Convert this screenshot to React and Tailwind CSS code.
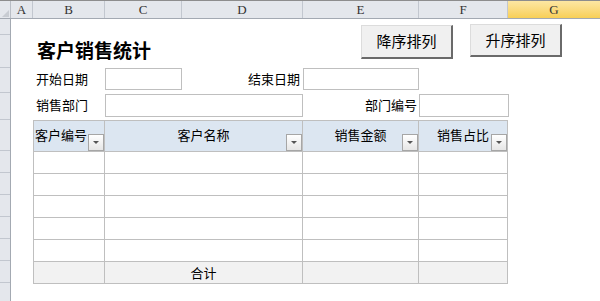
import React from "react";

const font = { fontFamily: '"Noto Sans CJK SC", "Noto Sans", sans-serif' };

const columns = [
  { label: "A", width: "w-[22px]" },
  { label: "B", width: "w-[72px]" },
  { label: "C", width: "w-[77px]" },
  { label: "D", width: "w-[121px]" },
  { label: "E", width: "w-[116px]" },
  { label: "F", width: "w-[89px]" },
];

const rowHeights = [
  "h-[16px]",
  "h-[33px]",
  "h-[25px]",
  "h-[27px]",
  "h-[31px]",
  "h-[22px]",
  "h-[22px]",
  "h-[22px]",
  "h-[22px]",
  "h-[22px]",
  "h-[22px]",
  "h-[40px]",
];

const FilterButton = () => (
  <div className="absolute right-0 bottom-0 w-[16px] h-[17px] border border-[#a6a6a6] bg-gradient-to-b from-white to-[#e6e6e6] flex items-center justify-center">
    <div className="w-0 h-0 border-l-[3px] border-r-[3px] border-t-[3px] border-l-transparent border-r-transparent border-t-[#555]" />
  </div>
);

const SheetButton = ({ children, className }) => (
  <button
    className={`bg-[#f0f0f0] border border-[#dcdcdc] border-r-2 border-b-2 border-r-[#6a6a6a] border-b-[#6a6a6a] text-[15px] text-black flex items-center justify-center ${className}`}
  >
    {children}
  </button>
);

export default function App() {
  return (
    <div className="w-[600px] h-[301px] overflow-hidden bg-white text-black" style={font}>
      {/* column letters */}
      <div className="flex h-[19px] border-t border-[#8d8d8d] border-b border-b-[#a3a9b2] bg-[#e4e7ec]">
        <div className="w-[11px] border-r border-[#b9bec6] relative">
          <div className="absolute right-[1px] bottom-[1px] w-0 h-0 border-l-[7px] border-t-[7px] border-l-transparent border-t-transparent border-b-0 border-r-[7px] border-r-[#c8ccd2]" />
        </div>
        {columns.map((c) => (
          <div
            key={c.label}
            className={`${c.width} border-r border-[#c2c7cf] text-center text-[13px] leading-[17px] text-[#333]`}
            style={{ fontFamily: '"Liberation Serif", serif' }}
          >
            {c.label}
          </div>
        ))}
        <div
          className="flex-1 bg-gradient-to-b from-[#fde7a2] to-[#f8cf55] text-center text-[13px] leading-[17px] text-[#333]"
          style={{ fontFamily: '"Liberation Serif", serif' }}
        >
          G
        </div>
      </div>

      <div className="flex">
        {/* row headers */}
        <div className="w-[11px] flex flex-col border-r border-[#a3a9b2]">
          {rowHeights.map((h, i) => (
            <div key={i} className={`${h} bg-[#e4e7ec] border-b border-[#c2c7cf] shrink-0`} />
          ))}
        </div>

        <div className="flex-1 pl-[22px]">
          {/* title + buttons */}
          <div className="flex h-[49px]">
            <div className="w-[328px] pl-[4px] pt-[20px] text-[19px] font-bold leading-[22px]">
              客户销售统计
            </div>
            <SheetButton className="w-[92px] h-[34px] mt-[6px]">降序排列</SheetButton>
            <SheetButton className="w-[92px] h-[33px] mt-[5px] ml-[17px]">升序排列</SheetButton>
          </div>

          {/* date row */}
          <div className="flex h-[25px] text-[13px] leading-[22px]">
            <div className="w-[72px] pl-[3px]">开始日期</div>
            <div className="w-[77px] h-[22px] border border-[#bfbfbf]" />
            <div className="w-[121px] text-right pr-[3px]">结束日期</div>
            <div className="w-[116px] h-[22px] border border-[#bfbfbf]" />
          </div>

          {/* department row */}
          <div className="flex h-[27px] pt-[1px] text-[13px] leading-[22px]">
            <div className="w-[72px] pl-[3px]">销售部门</div>
            <div className="w-[198px] h-[23px] border border-[#bfbfbf]" />
            <div className="w-[116px] text-right pr-[2px]">部门编号</div>
            <div className="w-[90px] h-[23px] border border-[#bfbfbf]" />
          </div>

          {/* table */}
          <div className="grid grid-cols-[71px_198px_116px_89px] w-[475px] border-l border-t border-[#bfbfbf] text-[13px]">
            <div className="relative h-[31px] bg-[#dce6f1] border-r border-b border-[#bfbfbf] flex items-center pl-[1px] pb-[2px]">
              客户编号
              <FilterButton />
            </div>
            <div className="relative h-[31px] bg-[#dce6f1] border-r border-b border-[#bfbfbf] flex items-center justify-center pb-[2px]">
              客户名称
              <FilterButton />
            </div>
            <div className="relative h-[31px] bg-[#dce6f1] border-r border-b border-[#bfbfbf] flex items-center justify-center pb-[2px]">
              销售金额
              <FilterButton />
            </div>
            <div className="relative h-[31px] bg-[#dce6f1] border-r border-b border-[#bfbfbf] flex items-center justify-center pb-[2px]">
              销售占比
              <FilterButton />
            </div>

            {[0, 1, 2, 3, 4].map((r) =>
              [0, 1, 2, 3].map((c) => (
                <div key={`${r}-${c}`} className="h-[22px] border-r border-b border-[#bfbfbf]" />
              ))
            )}

            <div className="h-[22px] bg-[#f2f2f2] border-r border-b border-[#bfbfbf]" />
            <div className="h-[22px] bg-[#f2f2f2] border-r border-b border-[#bfbfbf] flex items-center justify-center">
              合计
            </div>
            <div className="h-[22px] bg-[#f2f2f2] border-r border-b border-[#bfbfbf]" />
            <div className="h-[22px] bg-[#f2f2f2] border-r border-b border-[#bfbfbf]" />
          </div>
        </div>
      </div>
    </div>
  );
}
